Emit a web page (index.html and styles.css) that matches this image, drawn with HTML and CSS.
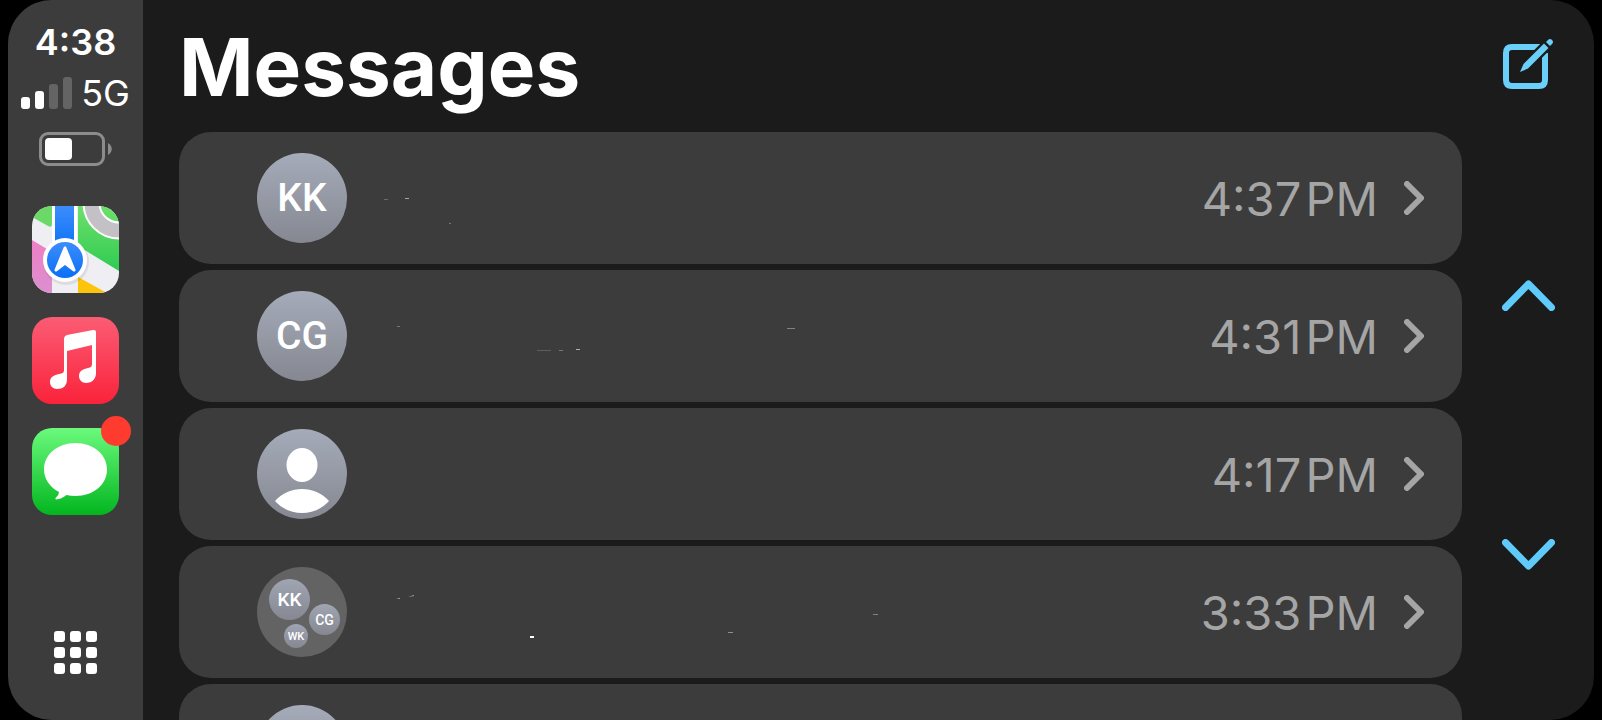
FILE: index.html
```
<!DOCTYPE html>
<html lang="en">
<head>
    <meta charset="UTF-8">
    <title>Messages</title>
    <link rel="stylesheet" href="styles.css">
</head>
<body>
    <div class="screen">
        <aside class="sidebar">
            <div class="clock">4:38</div>
            <div class="signal">
                <svg width="51" height="32" viewBox="0 0 51 32" aria-hidden="true">
                    <rect x="0" y="20" width="9" height="12" rx="3" fill="#fff"/>
                    <rect x="14" y="14" width="9" height="18" rx="3" fill="#fff"/>
                    <rect x="28" y="7" width="9" height="25" rx="3" fill="#646464"/>
                    <rect x="42" y="0" width="9" height="32" rx="3" fill="#646464"/>
                </svg>
                <span>5G</span>
            </div>
            <svg class="battery" width="73" height="34" viewBox="0 0 73 34" aria-hidden="true">
                <rect x="1.5" y="1.5" width="63" height="31" rx="7.5" fill="none" stroke="#8c8c8c" stroke-width="3"/>
                <rect x="6" y="6" width="27" height="22" rx="4" fill="#fff"/>
                <path d="M69 11c5 3 5 9 0 12z" fill="#8c8c8c"/>
            </svg>

            <nav class="apps">
                <button class="app" aria-label="Maps">
                    <svg viewBox="0 0 87 87">
                        <defs>
                            <linearGradient id="green" x1="0" y1="0" x2="0" y2="1">
                                <stop offset="0" stop-color="#6ee06c"/>
                                <stop offset="1" stop-color="#2fcb52"/>
                            </linearGradient>
                            <linearGradient id="blue" x1="0" y1="0" x2="0" y2="1">
                                <stop offset="0" stop-color="#3c8dfc"/>
                                <stop offset="1" stop-color="#0a70f5"/>
                            </linearGradient>
                            <linearGradient id="pink" x1="0" y1="0" x2="0" y2="1">
                                <stop offset="0" stop-color="#ee7fc4"/>
                                <stop offset="1" stop-color="#dc8fd0"/>
                            </linearGradient>
                        </defs>
                        <rect width="87" height="87" fill="#efeef3"/>
                        <path d="M0 0h20v18q0 4-4 2L0 11z" fill="#6ad968"/>
                        <path d="M46 0h41v65L46 40z" fill="url(#green)"/>
                        <circle cx="87" cy="-3" r="27.5" fill="none" stroke="#fff" stroke-width="18"/>
                        <circle cx="87" cy="-3" r="27.5" fill="none" stroke="#c3c1c5" stroke-width="14"/>
                        <path d="M0 34l20 12v41H0z" fill="url(#pink)"/>
                        <path d="M46 71l29 16H46z" fill="#fcc40a"/>
                        <path d="M20 0h3v45h-3zM42 0h3v45h-3z" fill="#fff"/>
                        <path d="M23 0h19v45H23z" fill="url(#blue)"/>
                        <circle cx="34" cy="56" r="23" fill="#000" opacity=".08"/>
                        <circle cx="33" cy="54" r="22" fill="#fff"/>
                        <circle cx="33" cy="54" r="18" fill="url(#blue)"/>
                        <path d="M33 42l9 22-9-7-9 7z" fill="#fff" stroke="#fff" stroke-width="3" stroke-linejoin="round"/>
                    </svg>
                </button>
                <button class="app app-music" aria-label="Music">
                    <svg viewBox="0 0 87 87">
                        <path d="M32 22q0-3 3-4l26-5q3-.5 3 2v41c0 6-4 10-10 10-4 0-7-3-7-7 0-5 4-7 9-8 3-.5 4-1.500 4-4V28l-25 6v28c0 7-4 10-10 10-4 0-7-3-7-7 0-5 4-7 9-8 4-.7 5-1.500 5-4z" fill="#fff"/>
                    </svg>
                </button>
                <button class="app app-messages" aria-label="Messages, new">
                    <svg viewBox="0 0 87 87">
                        <path d="M43.500 15c18 0 31.500 11.500 31.500 26.500S61.500 68 43.500 68q-5 0-9-1-5 4-10.500 4.500-1.500-.5 0-2 3-2.500 3-5.500C17.500 59 12 50.500 12 41.500 12 26.500 25.500 15 43.500 15z" fill="#fff"/>
                    </svg>
                    <span class="badge"></span>
                </button>
            </nav>

            <button class="home" aria-label="All apps">
                <svg width="43" height="43" viewBox="0 0 43 43" fill="#fff">
                    <rect x="0" y="0" width="11" height="11" rx="3"/>
                    <rect x="16" y="0" width="11" height="11" rx="3"/>
                    <rect x="32" y="0" width="11" height="11" rx="3"/>
                    <rect x="0" y="16" width="11" height="11" rx="3"/>
                    <rect x="16" y="16" width="11" height="11" rx="3"/>
                    <rect x="32" y="16" width="11" height="11" rx="3"/>
                    <rect x="0" y="32" width="11" height="11" rx="3"/>
                    <rect x="16" y="32" width="11" height="11" rx="3"/>
                    <rect x="32" y="32" width="11" height="11" rx="3"/>
                </svg>
            </button>
        </aside>

        <main class="content">
            <h1>Messages</h1>
            <div class="list">
                <button class="row">
                    <span class="avatar">KK</span>
                    <!-- hidden name and preview -->
                    <svg class="preview" width="520" height="90" viewBox="0 0 520 90" fill="#b0b0b0" aria-hidden="true">
                        <rect x="17" y="46" width="4" height="1" opacity=".4"/>
                        <rect x="38" y="45" width="4" height="1" opacity=".9"/>
                        <rect x="82" y="70" width="2" height="1" opacity=".5"/>
                    </svg>
                    <span class="time">4:37&hairsp;PM</span>
                    <svg class="chevron" width="20" height="34" viewBox="0 0 20 34"><path d="M3 3l14 14L3 31"/></svg>
                </button>
                <button class="row">
                    <span class="avatar">CG</span>
                    <svg class="preview" width="520" height="90" viewBox="0 0 520 90" fill="#b0b0b0" aria-hidden="true">
                        <rect x="30" y="35" width="3" height="1" opacity=".5"/>
                        <rect x="170" y="59" width="14" height="1" opacity=".3"/>
                        <rect x="192" y="59" width="4" height="1" opacity=".5"/>
                        <rect x="209" y="58" width="4" height="1"/>
                        <rect x="420" y="37" width="8" height="1" opacity=".6"/>
                    </svg>
                    <span class="time">4:31&hairsp;PM</span>
                    <svg class="chevron" width="20" height="34" viewBox="0 0 20 34"><path d="M3 3l14 14L3 31"/></svg>
                </button>
                <button class="row">
                    <span class="avatar">
                        <svg width="90" height="90" viewBox="0 0 90 90" fill="#fff">
                            <ellipse cx="45" cy="36" rx="15.500" ry="17"/>
                            <path d="M18 72c14-16 40-16 54 0-14 16-40 16-54 0z"/>
                        </svg>
                    </span>
                    <span class="time">4:17&hairsp;PM</span>
                    <svg class="chevron" width="20" height="34" viewBox="0 0 20 34"><path d="M3 3l14 14L3 31"/></svg>
                </button>
                <button class="row">
                    <span class="avatar group">
                        <span class="member large">KK</span>
                        <span class="member medium">CG</span>
                        <span class="member small">WK</span>
                    </span>
                    <svg class="preview" width="520" height="90" viewBox="0 0 520 90" fill="#b0b0b0" aria-hidden="true">
                        <path d="M29 32l4-1v1zM41 30l6-2v1l-6 1z"/>
                        <rect x="163" y="69" width="4" height="2" fill="#fff"/>
                        <rect x="361" y="65" width="5" height="1" opacity=".7"/>
                        <rect x="506" y="47" width="5" height="1" opacity=".6"/>
                    </svg>
                    <span class="time">3:33&hairsp;PM</span>
                    <svg class="chevron" width="20" height="34" viewBox="0 0 20 34"><path d="M3 3l14 14L3 31"/></svg>
                </button>
                <button class="row" aria-label="Conversation">
                    <span class="avatar"></span>
                </button>
            </div>
        </main>

        <div class="rail">
            <button class="compose" aria-label="New message">
                <svg width="50" height="50" viewBox="0 0 50 50">
                    <path d="M37 8H9q-6 0-6 6v27q0 6 6 6h27q6 0 6-6V14" fill="none" stroke="#6ad0fa" stroke-width="6"/>
                    <path d="M14 36L49 1" stroke="#1b1b1b" stroke-width="11"/>
                    <path d="M17 33l3.500-8L41 4.500l4.500 4.500L25 29.500z" fill="#6ad0fa"/>
                    <path d="M43 3l2-2q2-2 4 0t0 4l-2 2z" fill="#6ad0fa"/>
                </svg>
            </button>
            <div class="scroll">
                <button aria-label="Scroll up">
                    <svg width="53" height="31" viewBox="0 0 53 31"><path d="M3.500 27.500l23-23.500 23 23.500"/></svg>
                </button>
                <button aria-label="Scroll down">
                    <svg width="53" height="31" viewBox="0 0 53 31"><path d="M3.500 3.500l23 23.500 23-23.500"/></svg>
                </button>
            </div>
        </div>
    </div>
</body>
</html>
```
FILE: styles.css
```
* {
    box-sizing: border-box;
}
body {
    margin: 0;
    padding: 0 8px;
    background: #000;
    color: #fff;
    font-family: Inter, "Liberation Sans", sans-serif;
}
button {
    padding: 0;
    border: none;
    background: none;
    color: inherit;
    font: inherit;
    cursor: pointer;
}
svg {
    display: block;
}
.screen {
    display: flex;
    height: 100vh;
    overflow: hidden;
    border-radius: 44px;
    background: #1b1b1b;
}

/* Sidebar */
.sidebar {
    display: flex;
    flex-direction: column;
    align-items: center;
    flex: none;
    width: 135px;
    padding: 24px 0 46px;
    background: #3c3c3c;
}
.clock {
    font-size: 36px;
    font-weight: 600;
    line-height: 36px;
}
.signal {
    display: flex;
    align-items: center;
    gap: 9px;
    margin-top: 17px;
    font-size: 36px;
    line-height: 32px;
}
.battery {
    margin-top: 23px;
}
.apps {
    display: flex;
    flex-direction: column;
    gap: 24px;
    margin-top: 40px;
}
.app {
    position: relative;
    width: 87px;
    height: 87px;
    border-radius: 20px;
}
.app svg {
    border-radius: 20px;
}
.app-music {
    background: linear-gradient(#fb5c74, #fa233b);
}
.app-messages {
    background: linear-gradient(#6bfa7c, #02b61f);
}
.badge {
    position: absolute;
    top: -12px;
    right: -12px;
    width: 30px;
    height: 30px;
    border-radius: 50%;
    background: #ff3b30;
}
.home {
    margin-top: auto;
}

/* Conversations */
.content {
    flex: 1;
    min-width: 0;
    padding-left: 36px;
}
h1 {
    margin: 0;
    padding-top: 2px;
    font-size: 80px;
    font-weight: 700;
    line-height: 130px;
}
.list {
    display: flex;
    flex-direction: column;
    gap: 6px;
}
.row {
    display: flex;
    align-items: center;
    width: 100%;
    height: 132px;
    padding: 0 38px 0 78px;
    border-radius: 32px;
    background: #3c3c3c;
}
.avatar {
    display: flex;
    align-items: center;
    justify-content: center;
    flex: none;
    width: 90px;
    height: 90px;
    border-radius: 50%;
    background: linear-gradient(#a5abb9, #858891);
    font-family: Roboto, "Liberation Sans", sans-serif;
    font-size: 39px;
    font-weight: 500;
}
.avatar.group {
    position: relative;
    background: #636363;
}
.member {
    position: absolute;
    display: flex;
    align-items: center;
    justify-content: center;
    border-radius: 50%;
    background: linear-gradient(#a0a5b3, #858891);
}
.large {
    top: 12px;
    left: 12px;
    width: 41px;
    height: 41px;
    font-size: 19px;
}
.medium {
    top: 37px;
    left: 52px;
    width: 31px;
    height: 31px;
    font-size: 14px;
}
.small {
    top: 57px;
    left: 27px;
    width: 24px;
    height: 24px;
    font-size: 11px;
}
.preview {
    margin-left: 20px;
}
.time {
    margin-left: auto;
    color: #a5a5a5;
    font-size: 47px;
    white-space: nowrap;
}
.chevron {
    margin-left: 26px;
}
.chevron path {
    fill: none;
    stroke: #a5a5a5;
    stroke-width: 6;
    stroke-linecap: round;
    stroke-linejoin: round;
}

/* Right rail */
.rail {
    display: flex;
    flex-direction: column;
    align-items: center;
    flex: none;
    width: 132px;
    padding-top: 39px;
}
.scroll {
    display: flex;
    flex-direction: column;
    gap: 228px;
    margin-top: 191px;
}
.scroll path {
    fill: none;
    stroke: #5ecbfa;
    stroke-width: 7;
    stroke-linecap: round;
    stroke-linejoin: round;
}
```
